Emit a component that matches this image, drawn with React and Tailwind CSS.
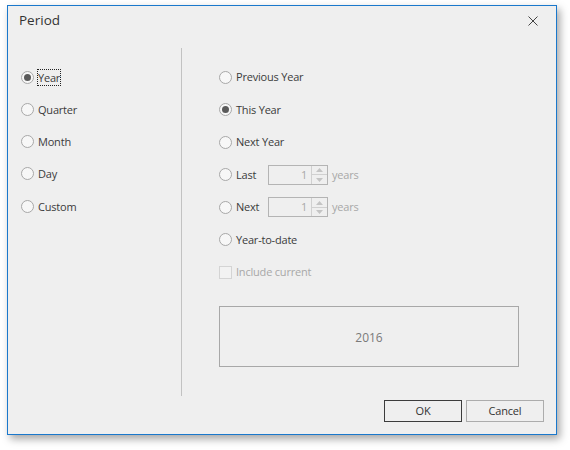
import { useState } from 'react'

const LEFT = ['Year', 'Quarter', 'Month', 'Day', 'Custom']

function Radio({ checked }) {
  return (
    <span className="flex h-[13px] w-[13px] shrink-0 items-center justify-center rounded-full border border-[#a8a8a8] bg-[#f7f7f7]">
      {checked && <span className="h-[7px] w-[7px] rounded-full bg-[#5a5a5a]" />}
    </span>
  )
}

function Spin() {
  return (
    <div className="flex h-[20px] w-[60px] border border-[#b4b4b4]">
      <div className="flex flex-1 items-center justify-end pr-[4px] text-[#a8a8a8]">1</div>
      <div className="flex w-[16px] flex-col border-l border-[#d0d0d0]">
        <div className="flex flex-1 items-center justify-center border-b border-[#d0d0d0]">
          <svg width="7" height="4" viewBox="0 0 7 4"><path d="M0 4 L3.5 0 L7 4 Z" fill="#c4c4c4" /></svg>
        </div>
        <div className="flex flex-1 items-center justify-center">
          <svg width="7" height="4" viewBox="0 0 7 4"><path d="M0 0 L3.5 4 L7 0 Z" fill="#c4c4c4" /></svg>
        </div>
      </div>
    </div>
  )
}

export default function App() {
  const [left, setLeft] = useState('Year')
  const [right, setRight] = useState('This Year')

  return (
    <div className="h-[450px] w-[570px] bg-white pl-[7px] pt-[5px] text-[11px] tracking-[-0.2px] text-[#3b3b3b]" style={{ fontFamily: '"Open Sans", "Noto Sans", sans-serif' }}>
      <div className="flex h-[430px] w-[550px] flex-col border border-[#1a78cc] bg-[#efefef] shadow-[3px_4px_8px_rgba(0,0,0,0.35)]">
        <div className="flex h-[32px] shrink-0 items-center justify-between pb-[3px] pl-[11px] pr-[18px]">
          <span className="text-[13.5px] tracking-normal text-[#333]">Period</span>
          <svg width="10" height="10" viewBox="0 0 10 10">
            <path d="M0.5 0.5 L9.5 9.5 M9.5 0.5 L0.5 9.5" stroke="#444" strokeWidth="1" />
          </svg>
        </div>

        <div className="flex h-[358px] shrink-0">
          <div className="flex w-[173px] flex-col pl-[13px] pt-[23px]">
            {LEFT.map((item) => (
              <div key={item} onClick={() => setLeft(item)} className="flex h-[32.25px] items-center gap-[3px]">
                <Radio checked={left === item} />
                <span className={`border px-0 leading-[15px] ${left === item ? 'border-dotted border-[#222]' : 'border-transparent'}`}>{item}</span>
              </div>
            ))}
          </div>

          <div className="mt-[10px] h-[348px] w-px bg-[#c2c2c2]" />

          <div className="flex flex-col pl-[37px] pt-[23px]">
            {['Previous Year', 'This Year', 'Next Year'].map((item) => (
              <div key={item} onClick={() => setRight(item)} className="flex h-[32.5px] items-center gap-[4px]">
                <Radio checked={right === item} />
                <span>{item}</span>
              </div>
            ))}
            {['Last', 'Next'].map((item) => (
              <div key={item} onClick={() => setRight(item)} className="flex h-[32.5px] items-center gap-[4px]">
                <Radio checked={right === item} />
                <span className="w-[28px]">{item}</span>
                <Spin />
                <span className="text-[#a8a8a8]">years</span>
              </div>
            ))}
            <div onClick={() => setRight('Year-to-date')} className="flex h-[32.5px] items-center gap-[4px]">
              <Radio checked={right === 'Year-to-date'} />
              <span>Year-to-date</span>
            </div>
            <div className="flex h-[32.5px] items-center gap-[4px]">
              <span className="h-[13px] w-[13px] border border-[#d4d4d4] bg-[#f2f2f2]" />
              <span className="text-[#a8a8a8]">Include current</span>
            </div>
            <div className="mt-[17px] flex h-[61px] w-[300px] items-center justify-center border border-[#a8a8a8] pt-[3px] text-[12px] tracking-normal text-[#7a7a7a]">
              2016
            </div>
          </div>
        </div>

        <div className="flex justify-end gap-[4px] pr-[12px] pt-[4px]">
          <button type="button" className="h-[22px] w-[78px] border border-[#3c3c3c] bg-[#efefef] text-[#333]">OK</button>
          <button type="button" className="h-[22px] w-[78px] border border-[#acacac] bg-[#efefef] text-[#333]">Cancel</button>
        </div>
      </div>
    </div>
  )
}
